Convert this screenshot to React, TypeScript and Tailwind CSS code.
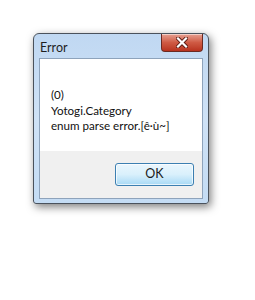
import React from "react";

export default function App() {
  return (
    <div className="w-[255px] h-[300px] bg-white pl-[33px] pt-[33px]" style={{ fontFamily: 'Lato, "Open Sans", sans-serif' }}>
      <div className="w-[176px] h-[171px] rounded-t-[6px] rounded-b-[3px] border border-[#4a525c] bg-gradient-to-b from-[#c0d8f2] via-[#cfe2f6] to-[#c4dcf4] shadow-[2px_3px_8px_rgba(0,0,0,0.5)] flex flex-col px-[5px] pb-[4px]">
        <div className="h-[24px] flex items-start justify-between">
          <span className="text-[12.5px] text-[#1e1e1e] mt-[6px] ml-[1px] leading-[16px]">Error</span>
          <div className="w-[42px] h-[18px] rounded-b-[4px] border border-[#6b2a22] border-t-0 bg-gradient-to-b from-[#e6a092] via-[#cf5a44] to-[#b8321e] flex items-center justify-center shadow-[inset_0_1px_0_rgba(255,255,255,0.5)]">
            <svg width="12" height="11" viewBox="0 0 12 11">
              <path d="M2 1.5 L10 9.5 M10 1.5 L2 9.5" stroke="#5a1a12" strokeWidth="4" strokeLinecap="square" />
              <path d="M2 1.5 L10 9.5 M10 1.5 L2 9.5" stroke="#ffffff" strokeWidth="2.2" strokeLinecap="square" />
            </svg>
          </div>
        </div>
        <div className="flex-1 border border-[#8ea3bb] flex flex-col bg-[#f0f0f0]">
          <div className="h-[92px] bg-white pl-[11px] pt-[28px] text-[11.6px] leading-[15.5px] text-[#111]">
            <div>(0)</div>
            <div>Yotogi.Category</div>
            <div>enum parse error.[ê·ù~]</div>
          </div>
          <div className="flex-1 flex justify-end items-start pt-[12px] pr-[8px]">
            <div className="w-[79px] h-[23px] rounded-[3px] border border-[#3c7fb1] bg-gradient-to-b from-[#eaf6fd] via-[#d9f0fc] to-[#a7d9f5] shadow-[inset_0_0_0_1px_rgba(255,255,255,0.7)] flex items-center justify-center text-[12.5px] text-[#1a1a1a]">
              OK
            </div>
          </div>
        </div>
      </div>
    </div>
  );
}
